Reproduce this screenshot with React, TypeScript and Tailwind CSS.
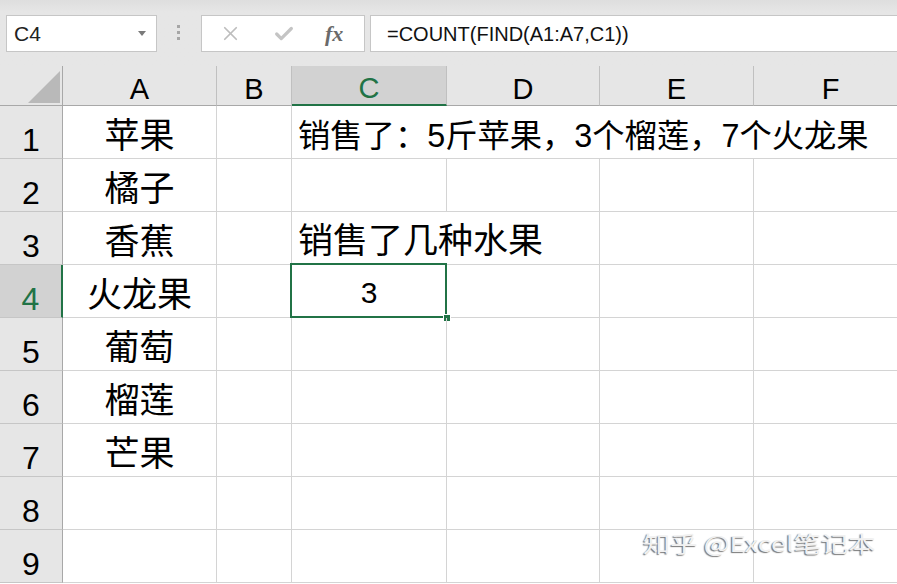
import React from 'react';
import { X, Check } from 'lucide-react';

const columns = ['A', 'B', 'C', 'D', 'E', 'F'];
const fruits = ['苹果', '橘子', '香蕉', '火龙果', '葡萄', '榴莲', '芒果', '', ''];

// cells whose right grid line is hidden by overflowing text
const hideRight: Record<string, boolean> = { C1: true, D1: true, E1: true, C3: true };

const ColumnHeader = ({ label, active }: { label: string; active?: boolean }) => (
  <div
    className={`flex items-end justify-center pb-[1px] text-[29px] leading-none border-r border-b ${
      active
        ? 'bg-[#d2d2d2] text-[#217346] border-r-[#c0c0c0] border-b-2 border-b-[#217346]'
        : 'bg-[#e6e6e6] text-black border-r-[#c0c0c0] border-b-[#a8a8a8]'
    }`}
  >
    {label}
  </div>
);

const RowHeader = ({ n, active }: { n: number; active?: boolean }) => (
  <div
    className={`flex items-end justify-center pb-[2px] text-[32px] leading-none border-b ${
      active
        ? 'bg-[#d2d2d2] text-[#217346] border-r-2 border-r-[#217346] border-b-[#c6c6c6]'
        : 'bg-[#e6e6e6] text-black border-r border-r-[#a8a8a8] border-b-[#c6c6c6]'
    }`}
  >
    {n}
  </div>
);

const SheetCell = ({ id, children, className = '' }: { id: string; children?: React.ReactNode; className?: string }) => (
  <div
    className={`relative flex items-end border-b border-[#d4d4d4] ${hideRight[id] ? '' : 'border-r'} ${className}`}
  >
    {children}
  </div>
);

export default function App() {
  return (
    <div className="relative w-[897px] h-[584px] overflow-hidden bg-white font-['Liberation_Sans','Noto_Sans_CJK_SC',sans-serif]">
      {/* formula bar */}
      <div className="h-[66px] bg-gradient-to-b from-[#dedede] to-[#e6e6e6] to-[12px] flex items-start pt-[15px]">
        <div className="ml-[6px] w-[151px] h-[37px] bg-white border border-[#c6c6c6] flex items-center justify-between pl-[7px] pr-[10px]">
          <span className="text-[21px] text-[#222]">C4</span>
          <svg width="8" height="5" viewBox="0 0 8 5">
            <path d="M0 0h8L4 5z" fill="#7a7a7a" />
          </svg>
        </div>
        <div className="ml-[20px] mt-[10px] flex flex-col gap-[3px]">
          <span className="w-[3px] h-[3px] bg-[#a6a6a6]" />
          <span className="w-[3px] h-[3px] bg-[#a6a6a6]" />
          <span className="w-[3px] h-[3px] bg-[#a6a6a6]" />
        </div>
        <div className="ml-[21px] w-[164px] h-[37px] bg-white border border-[#c6c6c6] flex items-center">
          <X className="ml-[17px] w-[23px] h-[23px] text-[#bdbdbd]" strokeWidth={1.8} />
          <Check className="ml-[31px] w-[22px] h-[22px] text-[#c4c4c4]" strokeWidth={3.5} />
          <span className="ml-[30px] font-['Liberation_Serif',serif] italic font-bold text-[22px] text-[#6a6a6a]">fx</span>
        </div>
        <div className="ml-[5px] flex-1 h-[37px] bg-white border border-r-0 border-[#c6c6c6] flex items-center pl-[16px]">
          <span className="text-[20px] text-[#111]">=COUNT(FIND(A1:A7,C1))</span>
        </div>
      </div>

      {/* worksheet */}
      <div className="grid grid-cols-[63px_154px_75px_155px_153px_154px_154px] grid-rows-[40px_repeat(9,53px)]">
        <div className="relative bg-[#e6e6e6] border-r border-b border-r-[#a8a8a8] border-b-[#a8a8a8]">
          <svg className="absolute left-[28px] top-[5px]" width="33" height="33" viewBox="0 0 33 33">
            <path d="M0 32L32 0V32Z" fill="#b9b9b9" />
          </svg>
        </div>
        {columns.map((c) => (
          <ColumnHeader key={c} label={c} active={c === 'C'} />
        ))}

        {fruits.map((fruit, i) => {
          const r = i + 1;
          return (
            <React.Fragment key={r}>
              <RowHeader n={r} active={r === 4} />
              <SheetCell id={`A${r}`} className="justify-center pb-[5px] text-[35px] leading-none text-black">
                {fruit}
              </SheetCell>
              <SheetCell id={`B${r}`} />
              <SheetCell id={`C${r}`} className="z-10">
                {r === 1 && (
                  <span className="pl-[6px] pb-[6px] whitespace-nowrap text-[32.3px] leading-none text-black">
                    销售了：5斤苹果，3个榴莲，7个火龙果
                  </span>
                )}
                {r === 3 && (
                  <span className="pl-[6px] pb-[6px] whitespace-nowrap text-[35px] leading-none text-black">
                    销售了几种水果
                  </span>
                )}
                {r === 4 && (
                  <>
                    <span className="w-full text-center pb-[9px] text-[30px] leading-none text-black">3</span>
                    <div className="absolute -left-[2px] -top-[2px] -right-[1px] -bottom-[1px] border-2 border-[#217346]" />
                    <div className="absolute -right-[5px] -bottom-[5px] w-[8px] h-[8px] bg-[#217346] border border-white" />
                  </>
                )}
              </SheetCell>
              <SheetCell id={`D${r}`} />
              <SheetCell id={`E${r}`} />
              <SheetCell id={`F${r}`} />
            </React.Fragment>
          );
        })}
      </div>

      {/* watermark */}
      <div className="absolute left-[643px] top-[531px] origin-left scale-x-[1.24] text-[22px] leading-none whitespace-nowrap font-['Noto_Sans_CJK_SC',sans-serif] text-[#f1f1f1] [text-shadow:-1px_1px_1px_rgba(0,0,0,0.55)]">
        知乎 @Excel笔记本
      </div>
    </div>
  );
}
